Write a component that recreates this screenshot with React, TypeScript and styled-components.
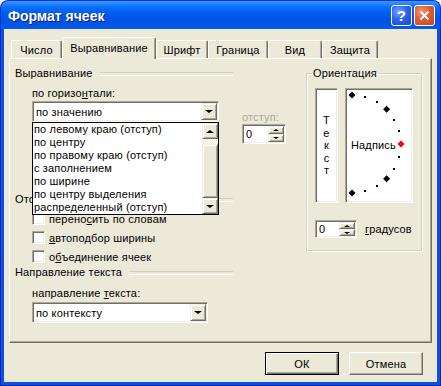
import styled, { createGlobalStyle } from "styled-components";

const GlobalStyle = createGlobalStyle`
  * { box-sizing: border-box; }
  html, body { margin: 0; padding: 0; background: #ffffff; }
  body {
    font-family: "Liberation Sans", Arial, sans-serif;
    font-size: 11px;
    letter-spacing: 0.15px;
    color: #000000;
  }
`;

const Window = styled.div`
  width: 441px;
  height: 386px;
  display: flex;
  flex-direction: column;
`;

const TitleBar = styled.div`
  height: 29px;
  flex: none;
  display: flex;
  align-items: center;
  justify-content: space-between;
  padding: 0 5px 0 7px;
  border-radius: 8px 8px 0 0;
  border: 1px solid #0831d9;
  border-bottom: none;
  background: linear-gradient(
    to bottom,
    #3d95ff 0px,
    #2c8bff 2px,
    #0b6ffd 6px,
    #0261ef 11px,
    #0055e5 17px,
    #0054e3 22px,
    #0058eb 26px,
    #0461f6 29px
  );
`;

const Title = styled.span`
  font-family: "Liberation Sans", Arial, sans-serif;
  font-weight: bold;
  font-size: 14px;
  letter-spacing: 0;
  color: #ffffff;
  text-shadow: 1px 1px 0 #0a1883;
  padding-top: 1px;
`;

const TitleButtons = styled.div`
  display: flex;
  gap: 2px;
`;

const TitleButton = styled.div<{ $close?: boolean }>`
  width: 21px;
  height: 21px;
  border: 1px solid #ffffff;
  border-radius: 3px;
  display: flex;
  align-items: center;
  justify-content: center;
  color: #ffffff;
  font-weight: bold;
  font-size: 15px;
  background: ${(p) =>
    p.$close
      ? "radial-gradient(circle at 35% 30%, #f0977a 0%, #e25b33 45%, #c7421c 100%)"
      : "radial-gradient(circle at 35% 30%, #7aa7ff 0%, #2a64f0 45%, #1846d0 100%)"};
`;

const Frame = styled.div`
  flex: 1;
  display: flex;
  padding: 0 3px 3px;
  background: #0b52e4;
  border: 1px solid #0027a8;
  border-top: none;
`;

const Client = styled.div`
  flex: 1;
  display: flex;
  flex-direction: column;
  background: #ece9d8;
  padding: 8px 0 0 5px;
`;

const TabRow = styled.div`
  display: flex;
  align-items: flex-end;
  height: 21px;
  padding-left: 2px;
`;

const Tab = styled.div<{ $active?: boolean; $w: number }>`
  position: relative;
  z-index: ${(p) => (p.$active ? 2 : 1)};
  width: ${(p) => p.$w}px;
  height: ${(p) => (p.$active ? 22 : 18)}px;
  margin-bottom: ${(p) => (p.$active ? -1 : 0)}px;
  display: flex;
  align-items: center;
  justify-content: center;
  padding-bottom: ${(p) => (p.$active ? 2 : 0)}px;
  background: #ece9d8;
  border-top: 1px solid #ffffff;
  border-left: 1px solid #ffffff;
  border-right: 1px solid #716f64;
  box-shadow: inset -1px 0 0 #aca899;
  border-radius: 2px 2px 0 0;
`;

const Panel = styled.div`
  width: 423px;
  height: 285px;
  display: flex;
  padding: 8px 9px 0 5px;
  border: 1px solid;
  border-color: #ffffff #716f64 #716f64 #ffffff;
  box-shadow: inset -1px -1px 0 #aca899;
`;

const LeftCol = styled.div`
  position: relative;
  width: 218px;
  display: flex;
  flex-direction: column;
`;

const GroupHeader = styled.div<{ $mt?: number }>`
  height: 13px;
  line-height: 13px;
  margin-top: ${(p) => p.$mt ?? 0}px;
  display: flex;
  align-items: center;
  gap: 7px;
  white-space: nowrap;
  &::after {
    content: "";
    flex: 1;
    height: 2px;
    border-top: 1px solid #d0d0bf;
    border-bottom: 1px solid #ffffff;
  }
`;

const Indent = styled.div<{ $mt?: number }>`
  padding-left: 17px;
  margin-top: ${(p) => p.$mt ?? 0}px;
  display: flex;
  flex-direction: column;
`;

const Label = styled.div<{ $muted?: boolean; $mt?: number }>`
  height: 13px;
  line-height: 13px;
  white-space: nowrap;
  margin-top: ${(p) => p.$mt ?? 0}px;
  color: ${(p) => (p.$muted ? "#aca899" : "#000000")};
`;

const FieldRow = styled.div`
  display: flex;
  gap: 23px;
  align-items: flex-start;
`;

const SubCol = styled.div<{ $pt?: number }>`
  display: flex;
  flex-direction: column;
  padding-top: ${(p) => p.$pt ?? 0}px;
`;

const Sunken = styled.div<{ $w: number; $h: number; $mt?: number }>`
  width: ${(p) => p.$w}px;
  height: ${(p) => p.$h}px;
  margin-top: ${(p) => p.$mt ?? 0}px;
  background: #ffffff;
  border: 1px solid;
  border-color: #aca899 #ffffff #ffffff #aca899;
  box-shadow: inset 1px 1px 0 #716f64, inset -1px -1px 0 #f1efe2;
  display: flex;
  align-items: center;
  justify-content: space-between;
  padding: 1px 1px 1px 3px;
  white-space: nowrap;
`;

const Raised = styled.div<{ $w: number; $h: number }>`
  width: ${(p) => p.$w}px;
  height: ${(p) => p.$h}px;
  flex: none;
  background: #ece9d8;
  border: 1px solid;
  border-color: #f1efe2 #716f64 #716f64 #f1efe2;
  box-shadow: inset 1px 1px 0 #ffffff, inset -1px -1px 0 #aca899;
  display: flex;
  align-items: center;
  justify-content: center;
`;

const Arrow = styled.span<{ $up?: boolean; $size?: number }>`
  width: 0;
  height: 0;
  border-left: ${(p) => p.$size ?? 4}px solid transparent;
  border-right: ${(p) => p.$size ?? 4}px solid transparent;
  ${(p) =>
    p.$up
      ? `border-bottom: ${(p.$size ?? 4) - 1}px solid #000;`
      : `border-top: ${(p.$size ?? 4) - 1}px solid #000;`}
`;

const SpinStack = styled.div`
  display: flex;
  flex-direction: column;
  align-self: stretch;
`;

const DropList = styled.div`
  position: absolute;
  z-index: 5;
  left: 17px;
  top: 55px;
  width: 187px;
  height: 93px;
  background: #ffffff;
  border: 1px solid #000000;
  display: flex;
`;

const Items = styled.div`
  flex: 1;
  display: flex;
  flex-direction: column;
`;

const Item = styled.div`
  height: 13px;
  line-height: 13px;
  padding-left: 1px;
  white-space: nowrap;
`;

const ScrollBar = styled.div`
  width: 16px;
  display: flex;
  flex-direction: column;
`;

const Track = styled.div<{ $h: number }>`
  height: ${(p) => p.$h}px;
  background-color: #ffffff;
  background-image: repeating-conic-gradient(#ece9d8 0 25%, #ffffff 0 50%);
  background-size: 2px 2px;
`;

const Thumb = styled(Raised)`
  flex: 1;
`;

const CheckRow = styled.div`
  height: 19px;
  display: flex;
  align-items: center;
  gap: 4px;
  white-space: nowrap;
`;

const CheckBox = styled.span`
  width: 13px;
  height: 13px;
  flex: none;
  background: #ffffff;
  border: 1px solid;
  border-color: #aca899 #ffffff #ffffff #aca899;
  box-shadow: inset 1px 1px 0 #716f64, inset -1px -1px 0 #f1efe2;
`;

const Group = styled.fieldset`
  margin: 0 0 0 73px;
  width: 116px;
  height: 184px;
  padding: 8px 8px 12px 8px;
  border: 1px solid #d0d0bf;
  box-shadow: inset 1px 1px 0 #ffffff, 1px 1px 0 #ffffff;
  display: flex;
  flex-direction: column;
`;

const Legend = styled.legend`
  padding: 0 1px;
  margin-left: -3px;
  line-height: 13px;
`;

const OrientRow = styled.div`
  display: flex;
  gap: 7px;
`;

const WhiteBox = styled.div<{ $w: number }>`
  position: relative;
  width: ${(p) => p.$w}px;
  height: 115px;
  background: #ffffff;
  border: 1px solid;
  border-color: #aca899 #ffffff #ffffff #aca899;
  box-shadow: inset 1px 1px 0 #716f64, inset -1px -1px 0 #f1efe2;
  display: flex;
  align-items: center;
`;

const VerticalText = styled.div`
  width: 100%;
  display: flex;
  flex-direction: column;
  align-items: center;
  line-height: 12.5px;
`;

const DialLabel = styled.span`
  padding-left: 5px;
  line-height: 13px;
`;

const Dial = styled.svg`
  position: absolute;
  left: 0;
  top: 0;
`;

const DegreeRow = styled.div`
  display: flex;
  align-items: center;
  gap: 8px;
  margin-top: 17px;
`;

const ButtonRow = styled.div`
  display: flex;
  justify-content: flex-end;
  gap: 10px;
  margin-top: 9px;
  padding-right: 14px;
`;

const Button = styled.div<{ $default?: boolean }>`
  width: 74px;
  height: 23px;
  display: flex;
  align-items: center;
  justify-content: center;
  background: #ece9d8;
  border: 1px solid;
  border-color: ${(p) =>
    p.$default ? "#000000" : "#ffffff #716f64 #716f64 #ffffff"};
  box-shadow: ${(p) =>
    p.$default
      ? "inset 1px 1px 0 #ffffff, inset -1px -1px 0 #716f64, inset -2px -2px 0 #aca899"
      : "inset -1px -1px 0 #aca899, inset 1px 1px 0 #f1efe2"};
`;

const Spinner = ({ w, h }: { w: number; h: number }) => (
  <Sunken $w={w} $h={h}>
    <span>0</span>
    <SpinStack>
      <Raised $w={16} $h={(h - 4) / 2}>
        <Arrow $up $size={3} />
      </Raised>
      <Raised $w={16} $h={(h - 4) / 2}>
        <Arrow $size={3} />
      </Raised>
    </SpinStack>
  </Sunken>
);

const Combo = ({ w, text, mt }: { w: number; text: string; mt?: number }) => (
  <Sunken $w={w} $h={21} $mt={mt}>
    <span>{text}</span>
    <Raised $w={16} $h={17}>
      <Arrow />
    </Raised>
  </Sunken>
);

const TABS = [
  { label: "Число", w: 51 },
  { label: "Выравнивание", w: 94, active: true },
  { label: "Шрифт", w: 52 },
  { label: "Граница", w: 60 },
  { label: "Вид", w: 54 },
  { label: "Защита", w: 56 },
];

const OPTIONS = [
  "по левому краю (отступ)",
  "по центру",
  "по правому краю (отступ)",
  "с заполнением",
  "по ширине",
  "по центру выделения",
  "распределенный (отступ)",
];

const diamond = (x: number, y: number, r: number) =>
  `${x},${y - r} ${x + r},${y} ${x},${y + r} ${x - r},${y}`;

const DialMarks = () => {
  const cx = 6;
  const cy = 55;
  const rad = 49;
  const big = [90, 45, 0, -45, -90];
  const small = [75, 60, 30, 15, -15, -30, -60, -75];
  return (
    <Dial width="64" height="111">
      {small.map((a) => {
        const t = (a * Math.PI) / 180;
        return (
          <rect
            key={a}
            x={Math.round(cx + rad * Math.cos(t)) - 1}
            y={Math.round(cy - rad * Math.sin(t)) - 1}
            width="2"
            height="2"
            fill="#000"
          />
        );
      })}
      {big.map((a) => {
        const t = (a * Math.PI) / 180;
        return (
          <polygon
            key={a}
            points={diamond(
              cx + rad * Math.cos(t),
              cy - rad * Math.sin(t),
              3.5
            )}
            fill={a === 0 ? "#ff0000" : "#000"}
          />
        );
      })}
    </Dial>
  );
};

export default function App() {
  return (
    <>
      <GlobalStyle />
      <Window>
        <TitleBar>
          <Title>Формат ячеек</Title>
          <TitleButtons>
            <TitleButton>?</TitleButton>
            <TitleButton $close>
              <svg width="11" height="11" viewBox="0 0 11 11">
                <path
                  d="M1.5 1.5 L9.5 9.5 M9.5 1.5 L1.5 9.5"
                  stroke="#fff"
                  strokeWidth="2"
                />
              </svg>
            </TitleButton>
          </TitleButtons>
        </TitleBar>
        <Frame>
          <Client>
            <TabRow>
              {TABS.map((t) => (
                <Tab key={t.label} $w={t.w} $active={t.active}>
                  {t.label}
                </Tab>
              ))}
            </TabRow>
            <Panel>
              <LeftCol>
                <GroupHeader>Выравнивание</GroupHeader>
                <Indent $mt={7}>
                  <FieldRow>
                    <SubCol>
                      <Label>
                        по горизо<u>н</u>тали:
                      </Label>
                      <Combo w={187} text="по значению" mt={1} />
                    </SubCol>
                    <SubCol $pt={24}>
                      <Label $muted>отступ:</Label>
                      <Spinner w={44} h={20} />
                    </SubCol>
                  </FieldRow>
                </Indent>
                <DropList>
                  <Items>
                    {OPTIONS.map((o) => (
                      <Item key={o}>{o}</Item>
                    ))}
                  </Items>
                  <ScrollBar>
                    <Raised $w={16} $h={16}>
                      <Arrow $up />
                    </Raised>
                    <Track $h={5} />
                    <Thumb $w={16} $h={54} />
                    <Raised $w={16} $h={16}>
                      <Arrow />
                    </Raised>
                  </ScrollBar>
                </DropList>
                <GroupHeader $mt={49}>Отображение</GroupHeader>
                <Indent $mt={3}>
                  <CheckRow>
                    <CheckBox />
                    <span>
                      перено<u>с</u>ить по словам
                    </span>
                  </CheckRow>
                  <CheckRow>
                    <CheckBox />
                    <span>
                      <u>а</u>втоподбор ширины
                    </span>
                  </CheckRow>
                  <CheckRow>
                    <CheckBox />
                    <span>
                      о<u>б</u>ъединение ячеек
                    </span>
                  </CheckRow>
                </Indent>
                <GroupHeader>Направление текста</GroupHeader>
                <Indent $mt={8}>
                  <Label>
                    направление <u>т</u>екста:
                  </Label>
                  <Combo w={176} text="по контексту" mt={2} />
                </Indent>
              </LeftCol>
              <Group>
                <Legend>Ориентация</Legend>
                <OrientRow>
                  <WhiteBox $w={23}>
                    <VerticalText>
                      <span>Т</span>
                      <span>е</span>
                      <span>к</span>
                      <span>с</span>
                      <span>т</span>
                    </VerticalText>
                  </WhiteBox>
                  <WhiteBox $w={68}>
                    <DialMarks />
                    <DialLabel>Надпись</DialLabel>
                  </WhiteBox>
                </OrientRow>
                <DegreeRow>
                  <Spinner w={42} h={18} />
                  <span>
                    <u>г</u>радусов
                  </span>
                </DegreeRow>
              </Group>
            </Panel>
            <ButtonRow>
              <Button $default>ОК</Button>
              <Button>Отмена</Button>
            </ButtonRow>
          </Client>
        </Frame>
      </Window>
    </>
  );
}
